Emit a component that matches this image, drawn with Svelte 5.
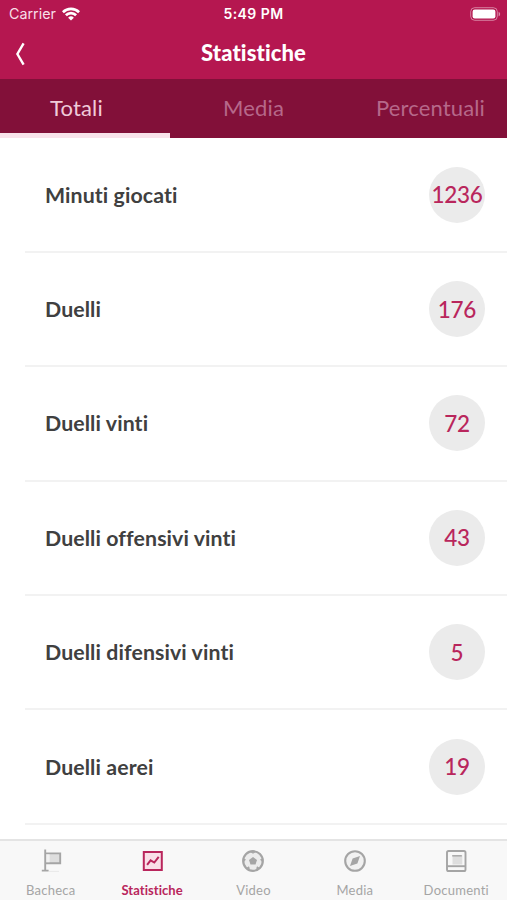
<script lang="ts">
  type Stat = { label: string; value: number };

  const tabs = ['Totali', 'Media', 'Percentuali'];
  const stats: Stat[] = [
    { label: 'Minuti giocati', value: 1236 },
    { label: 'Duelli', value: 176 },
    { label: 'Duelli vinti', value: 72 },
    { label: 'Duelli offensivi vinti', value: 43 },
    { label: 'Duelli difensivi vinti', value: 5 },
    { label: 'Duelli aerei', value: 19 }
  ];
  const sections = ['Bacheca', 'Statistiche', 'Video', 'Media', 'Documenti'];

  let activeTab = $state('Totali');
  let activeSection = $state('Statistiche');
</script>

<div class="screen">
  <header>
    <div class="status">
      <div class="carrier">
        <span>Carrier</span>
        <svg width="18" height="14" viewBox="0 0 18 14" fill="none" stroke="#fff" stroke-width="2.7">
          <path d="M.9 5.2a11.5 11.5 0 0 1 16.2 0" />
          <path d="M3.9 8.3a7.2 7.2 0 0 1 10.2 0" />
          <path d="M9 13.6 6.1 10.7a4.1 4.1 0 0 1 5.8 0Z" fill="#fff" stroke="none" />
        </svg>
      </div>
      <span class="time">5:49 PM</span>
      <svg class="battery" width="31" height="14" viewBox="0 0 31 14">
        <rect x=".7" y=".7" width="26.6" height="12.6" rx="4" fill="none" stroke="#fff" stroke-opacity=".45" />
        <rect x="2.6" y="2.6" width="22.8" height="8.8" rx="2.2" fill="#fff" />
        <path d="M28.6 4.7c2 .8 2 3.8 0 4.6Z" fill="#fff" fill-opacity=".5" />
      </svg>
    </div>
    <div class="title-bar">
      <button class="back" aria-label="Indietro">
        <svg width="12" height="24" viewBox="0 0 12 24" fill="none" stroke="#fff" stroke-width="2.4">
          <path d="M9.6 1.4 3.4 12l6.2 10.6" />
        </svg>
      </button>
      <h1>Statistiche</h1>
    </div>
  </header>

  <nav class="tabs">
    {#each tabs as tab}
      <button class:active={activeTab === tab} onclick={() => (activeTab = tab)}>{tab}</button>
    {/each}
  </nav>

  <ul class="stats">
    {#each stats as stat}
      <li>
        <span class="label">{stat.label}</span>
        <span class="value">{stat.value}</span>
      </li>
    {/each}
  </ul>

  <nav class="sections">
    {#each sections as section}
      <button class:active={activeSection === section} onclick={() => (activeSection = section)}>
        <svg width="24" height="24" viewBox="0 0 24 24" fill="none" stroke="currentColor" stroke-width="1.9">
          {#if section === 'Bacheca'}
            <path d="M10 22.4h10" stroke="#e8e8e8" stroke-width="1" />
            <path d="M7 4.4h14.2v9.8H7" fill="#dedede" />
            <path d="M7 5.4h3.6v7.8H7Z" fill="#f1f1f1" stroke="none" />
            <path d="M6.2.4v20.8M2.8 21.6h6.8" />
          {:else if section === 'Statistiche'}
            <rect x="3.8" y="3" width="18" height="18" fill="#f9dfe8" stroke-width="2" />
            <path d="m7.1 15.8 3.5-4.5 3.7 2.2 4.4-5.6" stroke-width="2" />
          {:else if section === 'Video'}
            <circle cx="12" cy="12" r="9.8" fill="#ececec" stroke-width="2.2" />
            <path d="m12 8 4 2.9-1.5 4.7h-5L8 10.9Z" fill="currentColor" stroke="none" />
            <path d="m9.2 2.5 2.8 1.8 2.8-1.8ZM2.2 9.4l.3 3.6 1.9-2.4ZM21.8 9.4l-.3 3.6-1.9-2.4ZM5.4 19.2l3 1.6-.5-3ZM18.6 19.2l-3 1.6.5-3Z" fill="currentColor" stroke-width=".8" />
          {:else if section === 'Media'}
            <circle cx="12" cy="12" r="9.8" fill="#f1f1f1" stroke-width="2.1" />
            <path d="m17 7-2.6 7.4L7 17l2.6-7.4Z" fill="currentColor" stroke="none" />
          {:else}
            <rect x="3" y="2" width="18.5" height="20" rx="1.6" />
            <path d="M8.5 6.3h9.8v9.2H8.5z" fill="#dedede" stroke="none" />
            <path d="M3 17.2h18.5" />
            <path d="M8.2 6.8h9.6" stroke-width="1.4" />
          {/if}
        </svg>
        <span>{section}</span>
      </button>
    {/each}
  </nav>
</div>

<style>
  :global(body) {
    background: #fff;
  }
  .screen {
    height: 900px;
    display: flex;
    flex-direction: column;
    overflow: hidden;
    background: #fff;
    font-family: Lato, 'Open Sans', sans-serif;
    font-variant-ligatures: none;
  }
  button {
    border: 0;
    padding: 0;
    background: none;
    color: inherit;
    font: inherit;
    letter-spacing: inherit;
  }
  header {
    flex: none;
    height: 79px;
    background: #b51750;
    color: #fff;
  }
  .status {
    height: 27px;
    padding: 0 6px 0 9px;
    display: grid;
    grid-template-columns: 1fr auto 1fr;
    align-items: center;
    font-family: Inter, 'Liberation Sans', sans-serif;
    font-size: 14.3px;
  }
  .carrier {
    display: flex;
    align-items: center;
    gap: 6px;
    color: #f8dfe8;
  }
  .time {
    padding-right: 3px;
    font-weight: 600;
    font-size: 14px;
    letter-spacing: 0.45px;
  }
  .battery {
    justify-self: end;
  }
  .title-bar {
    height: 52px;
    display: grid;
    grid-template-columns: 60px 1fr 60px;
    align-items: center;
  }
  .back {
    height: 22px;
    padding-left: 14px;
    text-align: left;
  }
  .back svg {
    display: block;
  }
  h1 {
    margin: 0;
    font-size: 22px;
    line-height: 28px;
    font-weight: 900;
    text-align: center;
    letter-spacing: 0.1px;
  }
  .tabs {
    flex: none;
    height: 58.5px;
    display: grid;
    grid-template-columns: 170px 1fr 170px;
    background: #821039;
    color: #b6688a;
    font-size: 22px;
    font-weight: 400;
    letter-spacing: 0.15px;
  }
  .tabs button {
    padding-top: 3px;
    border-bottom: 5px solid transparent;
  }
  .tabs button:first-child {
    padding-right: 17px;
  }
  .tabs button:last-child {
    padding-left: 17px;
  }
  .tabs .active {
    color: #f0cbd9;
    border-color: #f9e2ea;
  }
  .stats {
    flex: 1;
    min-height: 0;
    margin: 0;
    padding: 1px 0 0;
    list-style: none;
  }
  li {
    box-sizing: border-box;
    height: 114.4px;
    margin-left: 25px;
    padding: 0 22px 0 20px;
    display: flex;
    align-items: center;
    justify-content: space-between;
    border-bottom: 2px solid #f2f2f2;
  }
  .label {
    color: #404040;
    font-size: 21.3px;
    font-weight: 700;
    letter-spacing: 0.1px;
  }
  .value {
    width: 56px;
    height: 56px;
    display: flex;
    align-items: center;
    justify-content: center;
    border-radius: 50%;
    background: #ebebeb;
    color: #b9265c;
    font-size: 22.5px;
    font-weight: 500;
    letter-spacing: -0.3px;
  }
  .sections {
    flex: none;
    box-sizing: border-box;
    height: 61px;
    display: grid;
    grid-template-columns: repeat(5, 1fr);
    border-top: 2px solid #e4e4e4;
    background: #f8f8f8;
    color: #a5a5a5;
    font-size: 13px;
    line-height: 18px;
    letter-spacing: 0.25px;
  }
  .sections button {
    display: flex;
    flex-direction: column;
    align-items: center;
    gap: 8px;
    padding-top: 8px;
  }
  .sections .active {
    color: #b9265c;
    font-weight: 700;
    letter-spacing: 0.05px;
  }
</style>
